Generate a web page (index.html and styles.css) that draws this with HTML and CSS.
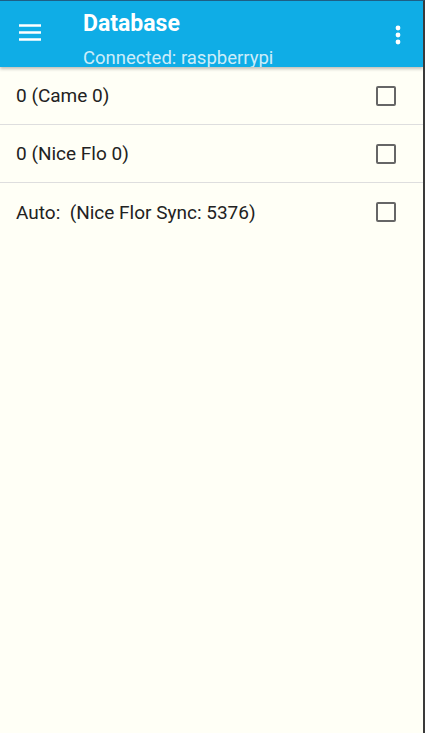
FILE: index.html
```html
<!DOCTYPE html>
<html lang="en">
<head>
    <meta charset="UTF-8">
    <title>Database</title>
    <meta name="viewport" content="width=device-width, initial-scale=1">
    <link rel="stylesheet" href="styles.css">
</head>
<body>
    <div class="screen">
        <header class="toolbar">
            <button class="icon-btn menu" aria-label="Menu">
                <svg width="24" height="24" viewBox="0 0 24 24"><path d="M1 5.5h22M1 12.5h22M1 19.5h22" stroke="#fff" stroke-width="2.6"/></svg>
            </button>
            <div class="titles">
                <div class="title">Database</div>
                <div class="subtitle">Connected: raspberrypi</div>
            </div>
            <button class="icon-btn more" aria-label="More">
                <svg width="8" height="24" viewBox="0 0 8 24"><circle cx="4" cy="4" r="2.4" fill="#fff"/><circle cx="4" cy="11" r="2.4" fill="#fff"/><circle cx="4" cy="18" r="2.4" fill="#fff"/></svg>
            </button>
        </header>

        <ul class="list">
            <li class="row"><span>0 (Came 0)</span><span class="check"></span></li>
            <li class="row"><span>0 (Nice Flo 0)</span><span class="check"></span></li>
            <li class="row no-line"><span>Auto:&nbsp; (Nice Flor Sync: 5376)</span><span class="check"></span></li>
        </ul>
    </div>
</body>
</html>
```

FILE: styles.css
```css
* {
    box-sizing: border-box;
}

body {
    margin: 0;
    font-family: Roboto, 'Noto Sans', sans-serif;
    background: #fffff6;
}

.screen {
    height: 733px;
    border-top: 1px solid #1d5f86;
    border-right: 2px solid #3a3a3a;
    background: #fffff6;
    overflow: hidden;
}

.toolbar {
    display: flex;
    align-items: flex-start;
    height: 66px;
    background: #0fade6;
    box-shadow: 0 2px 3px rgba(0, 0, 0, 0.25);
    overflow: hidden;
    position: relative;
}

.icon-btn {
    background: none;
    border: none;
    padding: 0;
    display: flex;
    align-items: center;
    justify-content: center;
}

.menu {
    width: 24px;
    margin: 19px 0 0 18px;
}

.titles {
    flex: 1;
    margin-left: 41px;
    color: #fff;
}

.title {
    font-size: 23px;
    font-weight: 700;
    line-height: 26px;
    margin-top: 10px;
}

.subtitle {
    font-size: 18.5px;
    line-height: 22px;
    margin-top: 10px;
    color: rgba(255, 255, 255, 0.8);
}

.more {
    margin: 23px 21px 0 0;
}

.list {
    list-style: none;
    margin: 0;
    padding: 0;
}

.row {
    display: flex;
    align-items: center;
    justify-content: space-between;
    height: 58px;
    padding: 0 27px 0 16px;
    border-bottom: 1px solid #dedede;
    font-size: 19px;
    color: #222;
}

.row.no-line {
    border-bottom: none;
}

.check {
    width: 20px;
    height: 20px;
    border: 2px solid #666;
    border-radius: 2px;
}
```
